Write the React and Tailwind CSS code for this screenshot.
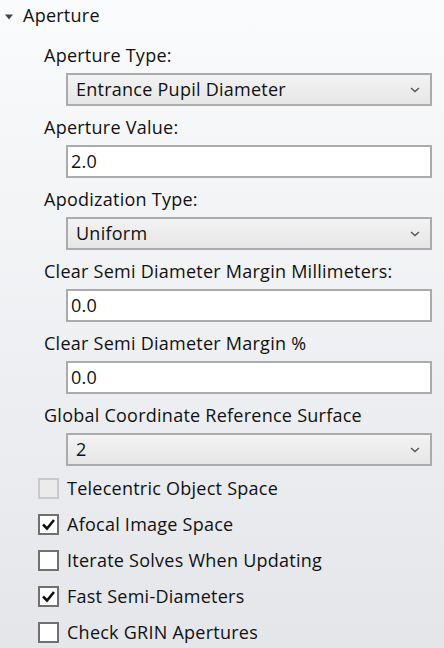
import React from 'react';

const font = { fontFamily: '"Segoe UI", "Open Sans", "Noto Sans", sans-serif' };

function Chevron() {
  return (
    <svg width="10" height="6" viewBox="0 0 10 6" className="shrink-0">
      <path d="M1 1 L5 4.5 L9 1" fill="none" stroke="#555" strokeWidth="1.4" />
    </svg>
  );
}

function Dropdown({ value }) {
  return (
    <div className="flex h-[33px] items-center justify-between border-2 border-[#ababab] bg-gradient-to-b from-[#f3f3f3] to-[#e6e6e6] pl-[8px] pr-[10px]">
      <span>{value}</span>
      <Chevron />
    </div>
  );
}

function TextBox({ value }) {
  return (
    <div className="flex h-[33px] items-center border-2 border-[#ababab] bg-white pl-[3px]">
      <span>{value}</span>
    </div>
  );
}

function Field({ label, children }) {
  return (
    <div className="mb-[9px]">
      <div className="h-[24px] leading-[24px] pl-[44px] mb-[6px]">{label}</div>
      <div className="ml-[66px] mr-[12px]">{children}</div>
    </div>
  );
}

function Check({ label, checked, disabled }) {
  return (
    <div className="flex h-[36px] items-center pl-[38px]">
      <div
        className={
          'flex h-[21px] w-[21px] items-center justify-center border-2 ' +
          (disabled ? 'border-[#c9c9c9] bg-[#ebebeb]' : 'border-[#707070] bg-white')
        }
      >
        {checked && (
          <svg width="15" height="13" viewBox="0 0 15 13">
            <path d="M2 6.5 L6 10.5 L13 2" fill="none" stroke="#111" strokeWidth="2.6" />
          </svg>
        )}
      </div>
      <span className="ml-[8px]">{label}</span>
    </div>
  );
}

export default function App() {
  return (
    <div
      style={font}
      className="h-[648px] w-[444px] overflow-hidden bg-gradient-to-b from-[#fafbfc] to-[#e4e6ea] text-[18px] tracking-[0.25px] text-[#111]"
    >
      <div className="flex h-[30px] items-center pl-[4px]">
        <svg width="10" height="6" viewBox="0 0 10 6" className="mt-[3px]">
          <path d="M1 0.5 L9 0.5 L5 5.5 Z" fill="#444" />
        </svg>
        <span className="ml-[9px]">Aperture</span>
      </div>
      <div className="pt-[13px]">
        <Field label="Aperture Type:">
          <Dropdown value="Entrance Pupil Diameter" />
        </Field>
        <Field label="Aperture Value:">
          <TextBox value="2.0" />
        </Field>
        <Field label="Apodization Type:">
          <Dropdown value="Uniform" />
        </Field>
        <Field label="Clear Semi Diameter Margin Millimeters:">
          <TextBox value="0.0" />
        </Field>
        <Field label="Clear Semi Diameter Margin %">
          <TextBox value="0.0" />
        </Field>
        <Field label="Global Coordinate Reference Surface">
          <Dropdown value="2" />
        </Field>
      </div>
      <div className="-mt-[5px]">
        <Check label="Telecentric Object Space" disabled />
        <Check label="Afocal Image Space" checked />
        <Check label="Iterate Solves When Updating" />
        <Check label="Fast Semi-Diameters" checked />
        <Check label="Check GRIN Apertures" />
      </div>
    </div>
  );
}
